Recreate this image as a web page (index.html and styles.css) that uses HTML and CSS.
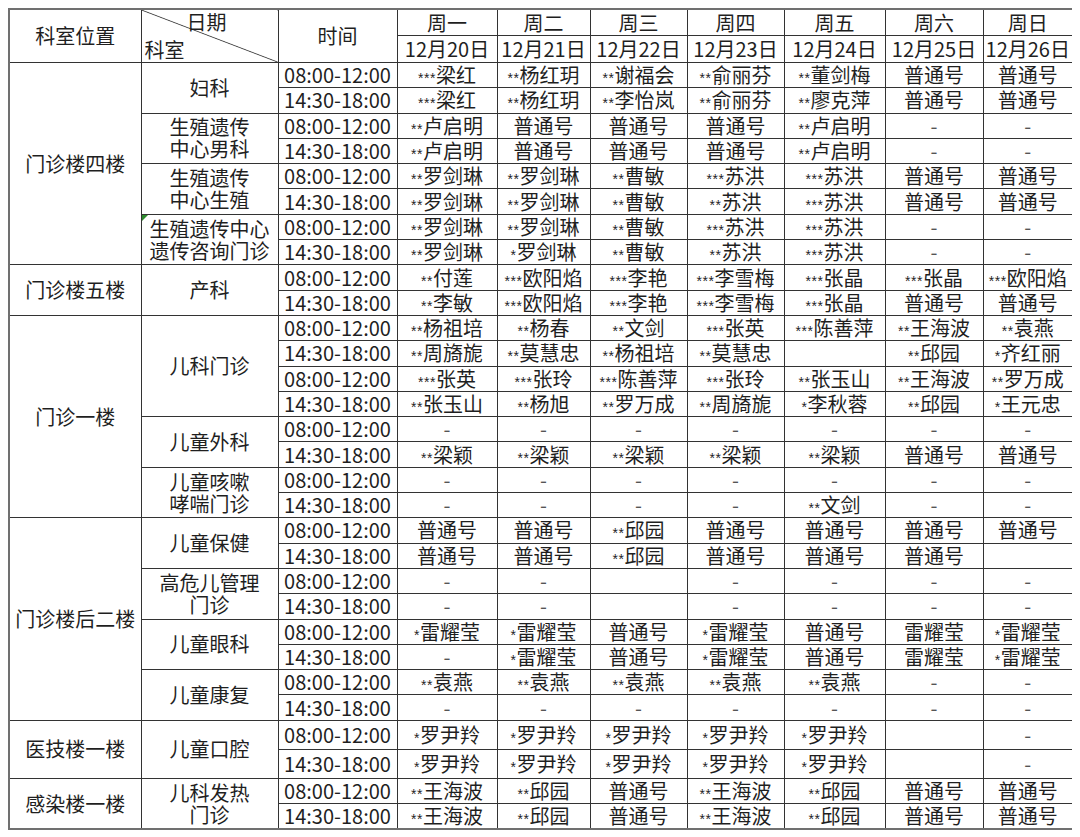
FILE: index.html
```html
<!DOCTYPE html>
<html lang="zh-CN">
<head>
<meta charset="utf-8">
<title>门诊排班表</title>
<link rel="stylesheet" href="styles.css">
</head>
<body>
<table class="sched">
<colgroup>
<col class="c-loc"><col class="c-dept"><col class="c-time">
<col class="c-d1"><col class="c-d2"><col class="c-d3"><col class="c-d4"><col class="c-d5"><col class="c-d6"><col class="c-d7">
</colgroup>
<thead>
<tr class="h1">
<th rowspan="2" class="loc">科室位置</th>
<th rowspan="2" class="diag"><div class="diag-in"><span class="dt">日期</span><span class="db">科室</span></div></th>
<th rowspan="2">时间</th>
<th>周一</th><th>周二</th><th>周三</th><th>周四</th><th>周五</th><th>周六</th><th>周日</th>
</tr>
<tr class="h2">
<th>12月20日</th><th>12月21日</th><th>12月22日</th><th>12月23日</th><th>12月24日</th><th>12月25日</th><th>12月26日</th>
</tr>
</thead>
<tbody>
<tr class="r">
<td rowspan="8" class="loc">门诊楼四楼</td>
<td rowspan="2" class="dept">妇科</td>
<td class="time">08:00-12:00</td>
<td><span class="s">***</span>梁红</td><td><span class="s">**</span>杨红玥</td><td><span class="s">**</span>谢福会</td><td><span class="s">**</span>俞丽芬</td><td><span class="s">**</span>董剑梅</td><td>普通号</td><td>普通号</td>
</tr>
<tr class="r">
<td class="time">14:30-18:00</td>
<td><span class="s">***</span>梁红</td><td><span class="s">**</span>杨红玥</td><td><span class="s">**</span>李怡岚</td><td><span class="s">**</span>俞丽芬</td><td><span class="s">**</span>廖克萍</td><td>普通号</td><td>普通号</td>
</tr>
<tr class="r">
<td rowspan="2" class="dept two">生殖遗传<br>中心男科</td>
<td class="time">08:00-12:00</td>
<td><span class="s">**</span>卢启明</td><td>普通号</td><td>普通号</td><td>普通号</td><td><span class="s">**</span>卢启明</td><td class="dash">-</td><td class="dash">-</td>
</tr>
<tr class="r">
<td class="time">14:30-18:00</td>
<td><span class="s">**</span>卢启明</td><td>普通号</td><td>普通号</td><td>普通号</td><td><span class="s">**</span>卢启明</td><td class="dash">-</td><td class="dash">-</td>
</tr>
<tr class="r">
<td rowspan="2" class="dept two">生殖遗传<br>中心生殖</td>
<td class="time">08:00-12:00</td>
<td><span class="s">**</span>罗剑琳</td><td><span class="s">**</span>罗剑琳</td><td><span class="s">**</span>曹敏</td><td><span class="s">***</span>苏洪</td><td><span class="s">***</span>苏洪</td><td>普通号</td><td>普通号</td>
</tr>
<tr class="r">
<td class="time">14:30-18:00</td>
<td><span class="s">**</span>罗剑琳</td><td><span class="s">**</span>罗剑琳</td><td><span class="s">**</span>曹敏</td><td><span class="s">**</span>苏洪</td><td><span class="s">***</span>苏洪</td><td>普通号</td><td>普通号</td>
</tr>
<tr class="r">
<td rowspan="2" class="dept two flag">生殖遗传中心<br>遗传咨询门诊</td>
<td class="time">08:00-12:00</td>
<td><span class="s">**</span>罗剑琳</td><td><span class="s">**</span>罗剑琳</td><td><span class="s">**</span>曹敏</td><td><span class="s">***</span>苏洪</td><td><span class="s">***</span>苏洪</td><td class="dash">-</td><td class="dash">-</td>
</tr>
<tr class="r">
<td class="time">14:30-18:00</td>
<td><span class="s">**</span>罗剑琳</td><td><span class="s">*</span>罗剑琳</td><td><span class="s">**</span>曹敏</td><td><span class="s">**</span>苏洪</td><td><span class="s">***</span>苏洪</td><td class="dash">-</td><td class="dash">-</td>
</tr>
<tr class="r">
<td rowspan="2" class="loc">门诊楼五楼</td>
<td rowspan="2" class="dept">产科</td>
<td class="time">08:00-12:00</td>
<td><span class="s">**</span>付莲</td><td><span class="s">***</span>欧阳焰</td><td><span class="s">***</span>李艳</td><td><span class="s">***</span>李雪梅</td><td><span class="s">***</span>张晶</td><td><span class="s">***</span>张晶</td><td><span class="s">***</span>欧阳焰</td>
</tr>
<tr class="r">
<td class="time">14:30-18:00</td>
<td><span class="s">**</span>李敏</td><td><span class="s">***</span>欧阳焰</td><td><span class="s">***</span>李艳</td><td><span class="s">***</span>李雪梅</td><td><span class="s">***</span>张晶</td><td>普通号</td><td>普通号</td>
</tr>
<tr class="r">
<td rowspan="8" class="loc">门诊一楼</td>
<td rowspan="4" class="dept">儿科门诊</td>
<td class="time">08:00-12:00</td>
<td><span class="s">**</span>杨祖培</td><td><span class="s">**</span>杨春</td><td><span class="s">**</span>文剑</td><td><span class="s">***</span>张英</td><td><span class="s">***</span>陈善萍</td><td><span class="s">**</span>王海波</td><td><span class="s">**</span>袁燕</td>
</tr>
<tr class="r">
<td class="time">14:30-18:00</td>
<td><span class="s">**</span>周旖旎</td><td><span class="s">**</span>莫慧忠</td><td><span class="s">**</span>杨祖培</td><td><span class="s">**</span>莫慧忠</td><td></td><td><span class="s">**</span>邱园</td><td><span class="s">*</span>齐红丽</td>
</tr>
<tr class="r">
<td class="time">08:00-12:00</td>
<td><span class="s">***</span>张英</td><td><span class="s">***</span>张玲</td><td><span class="s">***</span>陈善萍</td><td><span class="s">***</span>张玲</td><td><span class="s">**</span>张玉山</td><td><span class="s">**</span>王海波</td><td><span class="s">**</span>罗万成</td>
</tr>
<tr class="r">
<td class="time">14:30-18:00</td>
<td><span class="s">**</span>张玉山</td><td><span class="s">**</span>杨旭</td><td><span class="s">**</span>罗万成</td><td><span class="s">**</span>周旖旎</td><td><span class="s">*</span>李秋蓉</td><td><span class="s">**</span>邱园</td><td><span class="s">*</span>王元忠</td>
</tr>
<tr class="r">
<td rowspan="2" class="dept">儿童外科</td>
<td class="time">08:00-12:00</td>
<td class="dash">-</td><td class="dash">-</td><td class="dash">-</td><td class="dash">-</td><td class="dash">-</td><td class="dash">-</td><td class="dash">-</td>
</tr>
<tr class="r">
<td class="time">14:30-18:00</td>
<td><span class="s">**</span>梁颖</td><td><span class="s">**</span>梁颖</td><td><span class="s">**</span>梁颖</td><td><span class="s">**</span>梁颖</td><td><span class="s">**</span>梁颖</td><td>普通号</td><td>普通号</td>
</tr>
<tr class="r">
<td rowspan="2" class="dept two">儿童咳嗽<br>哮喘门诊</td>
<td class="time">08:00-12:00</td>
<td class="dash">-</td><td class="dash">-</td><td class="dash">-</td><td class="dash">-</td><td class="dash">-</td><td class="dash">-</td><td class="dash">-</td>
</tr>
<tr class="r">
<td class="time">14:30-18:00</td>
<td class="dash">-</td><td class="dash">-</td><td class="dash">-</td><td class="dash">-</td><td><span class="s">**</span>文剑</td><td class="dash">-</td><td class="dash">-</td>
</tr>
<tr class="r">
<td rowspan="8" class="loc">门诊楼后二楼</td>
<td rowspan="2" class="dept">儿童保健</td>
<td class="time">08:00-12:00</td>
<td>普通号</td><td>普通号</td><td><span class="s">**</span>邱园</td><td>普通号</td><td>普通号</td><td>普通号</td><td>普通号</td>
</tr>
<tr class="r">
<td class="time">14:30-18:00</td>
<td>普通号</td><td>普通号</td><td><span class="s">**</span>邱园</td><td>普通号</td><td>普通号</td><td>普通号</td><td></td>
</tr>
<tr class="r">
<td rowspan="2" class="dept two">高危儿管理<br>门诊</td>
<td class="time">08:00-12:00</td>
<td class="dash">-</td><td class="dash">-</td><td></td><td class="dash">-</td><td class="dash left">-</td><td class="dash">-</td><td class="dash">-</td>
</tr>
<tr class="r">
<td class="time">14:30-18:00</td>
<td class="dash">-</td><td class="dash">-</td><td></td><td class="dash">-</td><td class="dash">-</td><td class="dash">-</td><td class="dash">-</td>
</tr>
<tr class="r">
<td rowspan="2" class="dept">儿童眼科</td>
<td class="time">08:00-12:00</td>
<td class="sm"><span class="s">*</span>雷耀莹</td><td><span class="s">*</span>雷耀莹</td><td>普通号</td><td><span class="s">*</span>雷耀莹</td><td>普通号</td><td>雷耀莹</td><td><span class="s">*</span>雷耀莹</td>
</tr>
<tr class="r">
<td class="time">14:30-18:00</td>
<td class="dash">-</td><td class="sm"><span class="s">*</span>雷耀莹</td><td>普通号</td><td><span class="s">*</span>雷耀莹</td><td>普通号</td><td>雷耀莹</td><td><span class="s">*</span>雷耀莹</td>
</tr>
<tr class="r">
<td rowspan="2" class="dept">儿童康复</td>
<td class="time">08:00-12:00</td>
<td class="sm"><span class="s">**</span>袁燕</td><td class="sm"><span class="s">**</span>袁燕</td><td><span class="s">**</span>袁燕</td><td><span class="s">**</span>袁燕</td><td><span class="s">**</span>袁燕</td><td class="dash">-</td><td class="dash">-</td>
</tr>
<tr class="r">
<td class="time">14:30-18:00</td>
<td class="dash">-</td><td class="dash">-</td><td class="dash">-</td><td class="dash">-</td><td class="dash">-</td><td class="dash">-</td><td class="dash">-</td>
</tr>
<tr class="tall">
<td rowspan="2" class="loc">医技楼一楼</td>
<td rowspan="2" class="dept">儿童口腔</td>
<td class="time">08:00-12:00</td>
<td><span class="s">*</span>罗尹羚</td><td><span class="s">*</span>罗尹羚</td><td><span class="s">*</span>罗尹羚</td><td><span class="s">*</span>罗尹羚</td><td><span class="s">*</span>罗尹羚</td><td></td><td class="dash">-</td>
</tr>
<tr class="tall">
<td class="time">14:30-18:00</td>
<td><span class="s">*</span>罗尹羚</td><td><span class="s">*</span>罗尹羚</td><td><span class="s">*</span>罗尹羚</td><td><span class="s">*</span>罗尹羚</td><td><span class="s">*</span>罗尹羚</td><td></td><td class="dash">-</td>
</tr>
<tr class="r">
<td rowspan="2" class="loc">感染楼一楼</td>
<td rowspan="2" class="dept two">儿科发热<br>门诊</td>
<td class="time">08:00-12:00</td>
<td><span class="s">**</span>王海波</td><td><span class="s">**</span>邱园</td><td>普通号</td><td><span class="s">**</span>王海波</td><td><span class="s">**</span>邱园</td><td>普通号</td><td>普通号</td>
</tr>
<tr class="r">
<td class="time">14:30-18:00</td>
<td><span class="s">**</span>王海波</td><td><span class="s">**</span>邱园</td><td>普通号</td><td><span class="s">**</span>王海波</td><td><span class="s">**</span>邱园</td><td>普通号</td><td>普通号</td>
</tr>
</tbody>
</table>
</body>
</html>
```
FILE: styles.css
```css
html, body {
  background: #ffffff;
}
body {
  margin: 8px;
  font-family: "Noto Sans CJK SC", "Noto Sans", sans-serif;
  color: #1f1f1f;
}
.sched {
  border-collapse: collapse;
  table-layout: fixed;
  width: 1065px;
  border: 2px solid #707070;
}
.c-loc { width: 132px; }
.c-dept { width: 137px; }
.c-time { width: 119px; }
.c-d1 { width: 100px; }
.c-d2 { width: 93px; }
.c-d3 { width: 97px; }
.c-d4 { width: 97px; }
.c-d5 { width: 101px; }
.c-d6 { width: 98px; }
.c-d7 { width: 90px; }

.sched th,
.sched td {
  border: 1px solid #333333;
  padding: 0;
  text-align: center;
  vertical-align: middle;
  font-weight: 400;
  font-size: 20px;
  line-height: 22px;
  white-space: nowrap;
}
.h1 th { height: 25px; }
.h2 th { height: 26px; }
.r td { height: 24.3px; }
.tall td { height: 28px; }

.diag {
  background: linear-gradient(to top right,
    transparent calc(50% - 0.8px),
    #333333 50%,
    transparent calc(50% + 0.8px));
}
.diag-in {
  display: flex;
  flex-direction: column;
  height: 52px;
  justify-content: space-between;
  text-align: left;
}
.dt { padding-left: 45px; line-height: 24px; }
.db { padding-left: 3px; line-height: 24px; }

.two { line-height: 25px; }
.s {
  font-family: "Liberation Sans", sans-serif;
  font-size: 14px;
  line-height: 0;
  letter-spacing: 0.5px;
}
.dash { color: #555555; font-size: 16px; }
.left { text-align: left; padding-left: 4px; font-size: 12px; }
.sm { font-size: 17px; }
.flag { position: relative; }
.flag::before {
  content: "";
  position: absolute;
  top: 0;
  left: 0;
  border-top: 6px solid #2e8b2e;
  border-right: 6px solid transparent;
}
```
